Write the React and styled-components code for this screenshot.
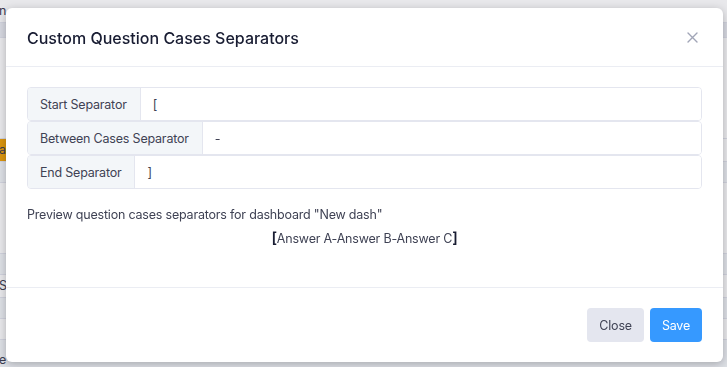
import React, { useState } from 'react'
import styled, { createGlobalStyle } from 'styled-components';

const GlobalStyle = createGlobalStyle`
	html, body {
		margin: 0;
		padding: 0;
		height: 100%;
		overflow: hidden;
	}
	body {
		font-family: "Inter", "Liberation Sans", sans-serif;
		font-size: 12.5px;
		letter-spacing: -0.2px;
		color: #3f4254;
		background: #fff;
	}
`;

const filas = [
	{ texto: 'n', fondo: '#fff', alto: 22 },
	{ texto: '', fondo: '#ebedf3', alto: 14 },
	{ texto: '', fondo: '#fff', alto: 100 },
	{ texto: 'a', fondo: '#fff', alto: 22, celda: '#f0a30a' },
	{ texto: '', fondo: '#f3f6f9', alto: 20 },
	{ texto: '', fondo: '#fff', alto: 70 },
	{ texto: '', fondo: '#f3f6f9', alto: 20 },
	{ texto: 'S', fondo: '#fff', alto: 22 },
	{ texto: '', fondo: '#f3f6f9', alto: 20 },
	{ texto: '', fondo: '#fff', alto: 20 },
	{ texto: 'e', fondo: '#f3f6f9', alto: 40 },
];

export default function App() {
	const [inicio, setInicio] = useState('[');
	const [entre, setEntre] = useState('-');
	const [fin, setFin] = useState(']');

	const respuestas = ['Answer A', 'Answer B', 'Answer C'];

	return (
		<>
			<GlobalStyle />
			<Pagina>
				{filas.map((f, i) => (
					<FilaFondo key={i} $fondo={f.fondo} $alto={f.alto}>
						<Celda $fondo={f.celda}>{f.texto}</Celda>
					</FilaFondo>
				))}
			</Pagina>
			<Capa>
				<Modal>
					<Cabecera>
						<Titulo>Custom Question Cases Separators</Titulo>
						<Cerrar aria-label="Close">
							<svg width="11" height="11" viewBox="0 0 11 11">
								<path d="M1 1L10 10M10 1L1 10" stroke="#a1a5b7" strokeWidth="1.4" strokeLinecap="round" />
							</svg>
						</Cerrar>
					</Cabecera>
					<Cuerpo>
						<Grupo>
							<Etiqueta>Start Separator</Etiqueta>
							<Input value={inicio} onChange={(e) => setInicio(e.target.value)} />
						</Grupo>
						<Grupo>
							<Etiqueta>Between Cases Separator</Etiqueta>
							<Input value={entre} onChange={(e) => setEntre(e.target.value)} />
						</Grupo>
						<Grupo>
							<Etiqueta>End Separator</Etiqueta>
							<Input value={fin} onChange={(e) => setFin(e.target.value)} />
						</Grupo>
						<Texto>Preview question cases separators for dashboard "New dash"</Texto>
						<Vista>
							<Corchete>{inicio}</Corchete>
							{respuestas.join(entre)}
							<Corchete>{fin}</Corchete>
						</Vista>
					</Cuerpo>
					<Pie>
						<Boton $tipo="gris">Close</Boton>
						<Boton $tipo="azul">Save</Boton>
					</Pie>
				</Modal>
			</Capa>
		</>
	)
}

const Pagina = styled.div`
	display: flex;
	flex-direction: column;
	color: #3f4254;
`;

const FilaFondo = styled.div`
	display: flex;
	height: ${(p) => p.$alto}px;
	background: ${(p) => p.$fondo};
	border-bottom: 1px solid #e4e6ef;
	line-height: ${(p) => p.$alto}px;
`;

const Celda = styled.div`
	width: 60px;
	text-indent: -1px;
	background: ${(p) => p.$fondo || 'transparent'};
`;

const Capa = styled.div`
	position: fixed;
	inset: 0;
	background: rgba(30, 34, 56, 0.1);
	display: flex;
	align-items: flex-start;
	padding: 8px 0 0 6px;
`;

const Modal = styled.div`
	width: 717px;
	background: #fff;
	border-radius: 6px;
	box-shadow: 0 2px 8px rgba(0, 0, 0, 0.25);
	display: flex;
	flex-direction: column;
`;

const Cabecera = styled.div`
	height: 58px;
	display: flex;
	align-items: center;
	justify-content: space-between;
	padding: 0 21px;
	border-bottom: 1px solid #ebedf3;
`;

const Titulo = styled.h3`
	margin: 0;
	font-size: 16px;
	font-weight: 500;
	letter-spacing: 0;
	color: #181c32;
	padding-top: 2px;
`;

const Cerrar = styled.button`
	border: none;
	background: none;
	padding: 0;
	margin-right: 4px;
	display: flex;
	cursor: pointer;
`;

const Cuerpo = styled.div`
	padding: 20px 21px 39px;
	display: flex;
	flex-direction: column;
`;

const Grupo = styled.div`
	display: flex;
	height: 34px;
	border: 1px solid #e4e6ef;
	border-radius: 4px;
	overflow: hidden;
	box-sizing: border-box;
`;

const Etiqueta = styled.span`
	display: flex;
	align-items: center;
	padding: 0 13px 0 12px;
	background: #f3f6f9;
	border-right: 1px solid #e4e6ef;
	color: #3f4254;
	white-space: nowrap;
`;

const Input = styled.input`
	flex: 1;
	border: none;
	outline: none;
	padding: 0 12px;
	font-family: inherit;
	font-size: 12.5px;
	letter-spacing: -0.2px;
	color: #3f4254;
	background: #fff;
`;

const Texto = styled.p`
	margin: 17px 0 0;
	color: #3f4254;
	line-height: 18px;
`;

const Vista = styled.div`
	margin-top: 5px;
	text-align: center;
	color: #3f4254;
	line-height: 18px;
`;

const Corchete = styled.span`
	font-size: 15px;
	font-weight: 600;
	color: #181c32;
`;

const Pie = styled.div`
	border-top: 1px solid #ebedf3;
	display: flex;
	justify-content: flex-end;
	gap: 6px;
	padding: 20px 21px 20px;
`;

const Boton = styled.button`
	height: 34px;
	padding: 0 12px;
	border: none;
	border-radius: 4px;
	font-family: inherit;
	font-size: 12.5px;
	letter-spacing: -0.2px;
	cursor: pointer;
	background: ${(p) => (p.$tipo === 'azul' ? '#3699ff' : '#e4e6ef')};
	color: ${(p) => (p.$tipo === 'azul' ? '#fff' : '#3f4254')};
`;
